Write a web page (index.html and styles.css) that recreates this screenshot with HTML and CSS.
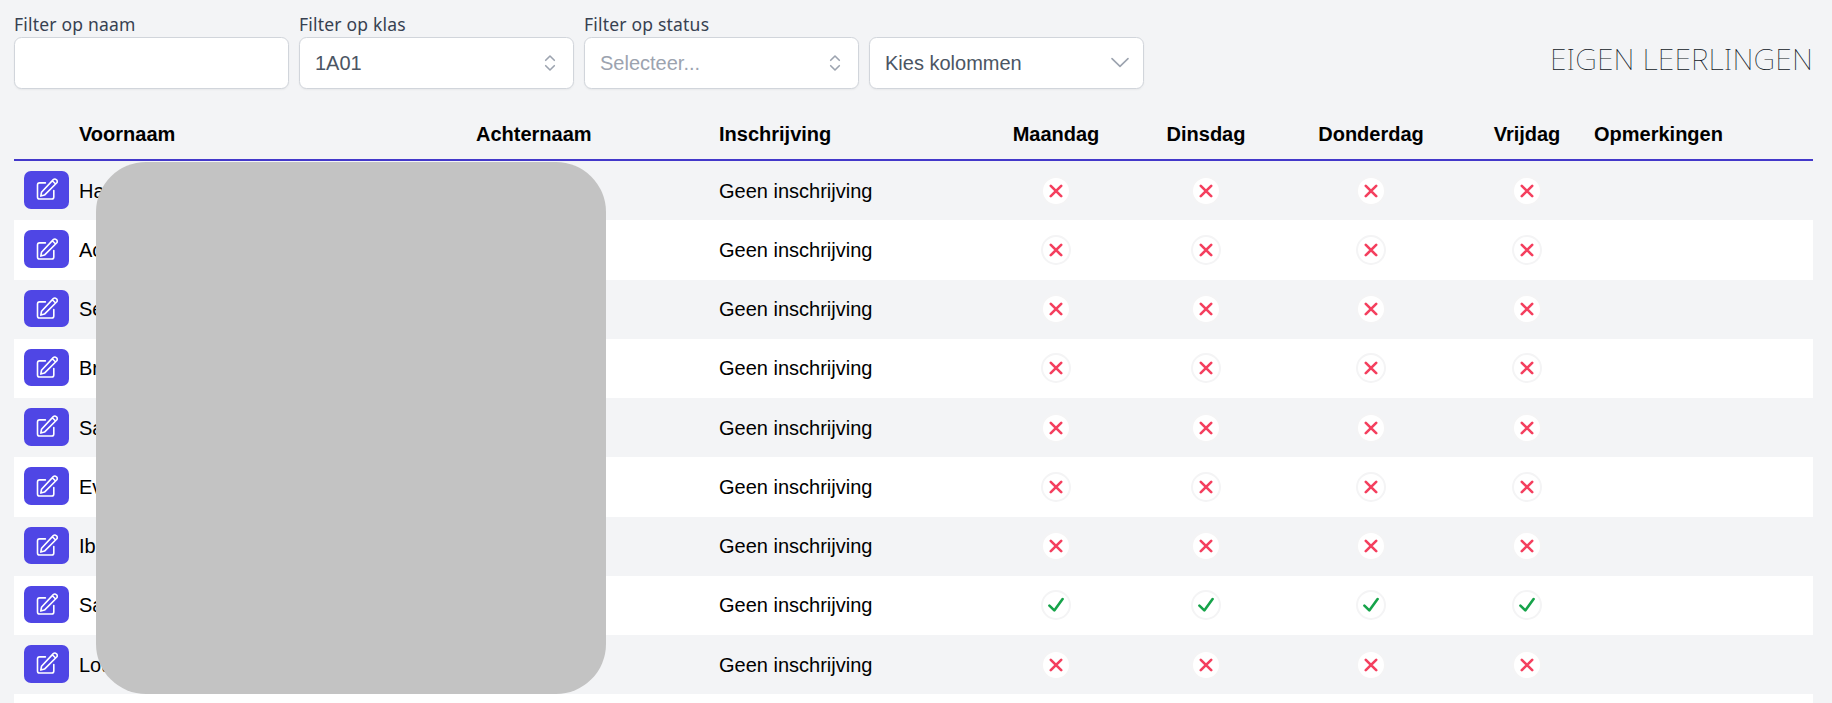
FILE: index.html
```
<!DOCTYPE html>
<html lang="nl">
<head>
<meta charset="utf-8">
<title>Eigen leerlingen</title>
<link rel="stylesheet" href="styles.css">
</head>
<body>
<svg class="sprite" width="0" height="0">
  <symbol id="edit" viewBox="0 0 22 22"><path d="M9.4 4.9H3.6Q1.5 4.9 1.5 7V18.9Q1.5 21 3.6 21H15.700Q17.800 21 17.800 18.900V12.600M4.800 18.100L5.500 14.300L17.300 1.600Q18.800 .4 20.500 1.800Q22 3.500 20.600 5L8.500 17.100ZM16.300 2.700L19.600 6"/></symbol>
  <symbol id="cross" viewBox="0 0 14 14"><path d="M1.800 1.800L12.200 12.200M12.200 1.800L1.800 12.200"/></symbol>
  <symbol id="check" viewBox="0 0 16 16"><path d="M1.400 8.600L6.300 13.400L14.600 2"/></symbol>
  <symbol id="updown" viewBox="0 0 12 18"><path d="M1.700 6.300L6 2L10.300 6.300M1.700 11.700L6 16L10.300 11.700"/></symbol>
  <symbol id="down" viewBox="0 0 18 12"><path d="M1 1.600L9 9.400L17 1.600"/></symbol>
</svg>
<header class="toolbar">
  <div class="field"><label class="label">Filter op naam</label><div class="control"></div></div>
  <div class="field"><label class="label">Filter op klas</label><div class="control"><span>1A01</span><svg class="updown"><use href="#updown"/></svg></div></div>
  <div class="field"><label class="label">Filter op status</label><div class="control placeholder"><span>Selecteer...</span><svg class="updown"><use href="#updown"/></svg></div></div>
  <div class="field"><div class="control"><span>Kies kolommen</span><svg class="down"><use href="#down"/></svg></div></div>
  <h1 class="title">EIGEN LEERLINGEN</h1>
</header>
<main class="table">
  <div class="row head"><span></span><span>Voornaam</span><span>Achternaam</span><span>Inschrijving</span><span class="day">Maandag</span><span class="day">Dinsdag</span><span class="day">Donderdag</span><span class="day">Vrijdag</span><span>Opmerkingen</span></div>
  <div class="cover"></div>
</main>
<script src="app.js"></script>
</body>
</html>
```
FILE: styles.css
```
* { box-sizing: border-box; }
body {
  margin: 0;
  height: 703px;
  overflow: hidden;
  background: #f3f4f6;
  color: #000;
  font: 20px/30px "Liberation Sans", Arial, sans-serif;
}
.sprite { position: absolute; }
svg { fill: none; stroke: currentColor; stroke-linecap: round; stroke-linejoin: round; }
.toolbar {
  display: flex;
  align-items: flex-end;
  gap: 10px;
  height: 89px;
  padding: 0 19px 0 14px;
}
.field { width: 275px; }
.label {
  display: block;
  height: 25px;
  color: #374151;
  font: 17.5px/25px "Noto Sans", sans-serif;
  letter-spacing: .2px;
}
.control {
  display: flex;
  align-items: center;
  justify-content: space-between;
  height: 52px;
  padding: 0 17px 0 15px;
  border: 1px solid #d1d5db;
  border-radius: 7.5px;
  background: #fff;
  color: #4b5563;
  box-shadow: 0 1px 2px rgba(0, 0, 0, .05);
}
.placeholder span { color: #9ca3af; }
.updown { width: 12px; height: 18px; color: #9ca3af; stroke-width: 1.6; }
.down { width: 18px; height: 12px; margin-right: -3px; color: #9ca3af; stroke-width: 1.6; }
.title {
  margin: 0 0 8px auto;
  color: #111827;
  font: 100 30px/45px "Noto Sans", sans-serif;
  letter-spacing: .13px;
}
.table { position: relative; height: 614px; margin: 0 19px 0 14px; overflow: hidden; }
.row {
  display: grid;
  grid-template-columns: 55px 397px 243px 263px 168px 132px 198px 114px 1fr;
  align-items: center;
  height: 59.25px;
}
.row:nth-child(odd) { background: #fff; }
.row:nth-last-child(2) { height: 9px; background: #fff; }
.row > span { padding-left: 10px; white-space: nowrap; }
.row > .day { padding: 0; display: flex; justify-content: center; }
.row.head {
  height: 72px;
  padding-top: 30px;
  align-items: start;
  border-bottom: 2px solid #4338ca;
  background: none;
  font-weight: 700;
}
.row:nth-child(even) { background: #fff; }
.row:nth-child(odd) { background: none; }
.row:nth-child(even) { background: none; }
.row:nth-child(odd):not(.head) { background: #fff; }
.edit {
  display: flex;
  align-items: center;
  justify-content: center;
  width: 45px;
  height: 37.5px;
  margin: 0 0 1.5px 10px;
  padding: 0;
  border: 0;
  border-radius: 7px;
  background: #4f46e5;
  color: #fff;
}
.edit svg { width: 22px; height: 22px; margin-bottom: 1px; stroke-width: 1.6; overflow: visible; }
.mark {
  display: flex;
  align-items: center;
  justify-content: center;
  width: 30px;
  height: 30px;
  border: 2px solid #f4f4f5;
  border-radius: 50%;
  background: #fff;
}
.mark.no { color: #f43f5e; }
.mark.yes { color: #16a34a; }
.mark.no svg { width: 14px; height: 14px; stroke-width: 2.6; }
.mark.yes svg { width: 16px; height: 16px; stroke-width: 2.6; }
.cover {
  position: absolute;
  left: 82px;
  top: 73px;
  width: 510px;
  height: 532px;
  border-radius: 50px;
  background: #c3c3c3;
}
```
FILE: app.js
```
const names = ["Ha", "Ac", "Se", "Br", "Sa", "Ev", "Ib", "Sa", "Lou", ""];
const cover = document.querySelector(".cover");
names.forEach((name, i) => {
  const row = document.createElement("div");
  row.className = "row";
  const present = i === 7;
  const mark = `<span class="day"><span class="mark ${present ? "yes" : "no"}"><svg><use href="#${present ? "check" : "cross"}"/></svg></span></span>`;
  if (name) {
    row.innerHTML = `<button class="edit"><svg><use href="#edit"/></svg></button><span>${name}</span><span></span><span>Geen inschrijving</span>${mark.repeat(4)}<span></span>`;
  }
  cover.before(row);
});
```
